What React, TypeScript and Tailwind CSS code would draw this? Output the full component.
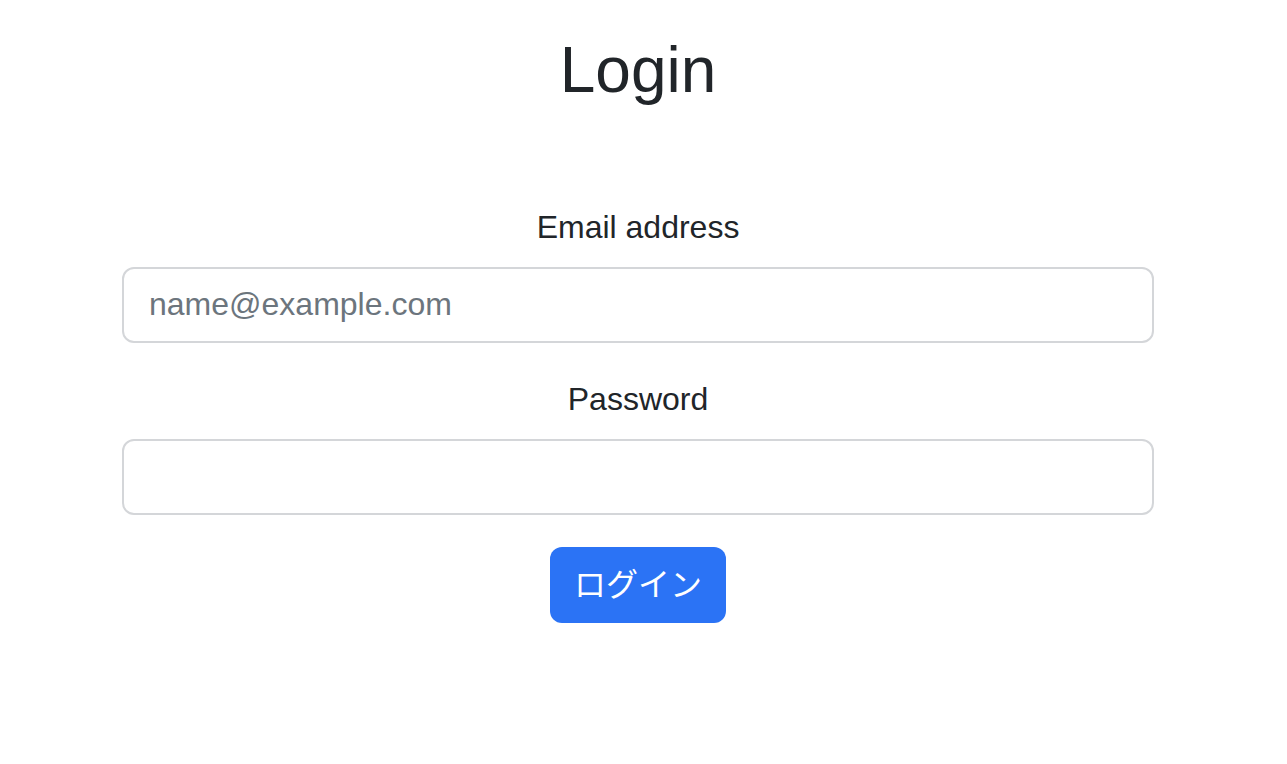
import React, { useState } from 'react';

const App: React.FC = () => {
  const [email, setEmail] = useState('');
  const [password, setPassword] = useState('');

  return (
    <div className="min-h-screen bg-white text-[#212529] font-['Liberation_Sans','Noto_Sans_CJK_JP',sans-serif]">
      <div className="ml-[122px] w-[1032px] pt-[32px]">
        {/* Title */}
        <h1 className="text-center text-[64px] leading-[1.2] font-medium">Login</h1>

        <form className="mt-[94px]" onSubmit={(e) => e.preventDefault()}>
          <div className="mb-[32px]">
            <label className="block text-center text-[32px] leading-[1.5] mb-[16px]">
              Email address
            </label>
            <input
              type="email"
              value={email}
              onChange={(e) => setEmail(e.target.value)}
              placeholder="name@example.com"
              className="block w-full h-[76px] px-[25px] text-[32px] border-2 border-[#d4d6d9] rounded-[12px] placeholder:text-[#6c757d] outline-none"
            />
          </div>

          <div className="mb-[32px]">
            <label className="block text-center text-[32px] leading-[1.5] mb-[16px]">
              Password
            </label>
            <input
              type="password"
              value={password}
              onChange={(e) => setPassword(e.target.value)}
              className="block w-full h-[76px] px-[25px] text-[32px] border-2 border-[#d4d6d9] rounded-[12px] outline-none"
            />
          </div>

          <div className="flex justify-center">
            <button
              type="submit"
              className="w-[176px] h-[76px] bg-[#2b73f5] text-white text-[32px] rounded-[12px]"
            >
              ログイン
            </button>
          </div>
        </form>
      </div>
    </div>
  );
};

export default App;
